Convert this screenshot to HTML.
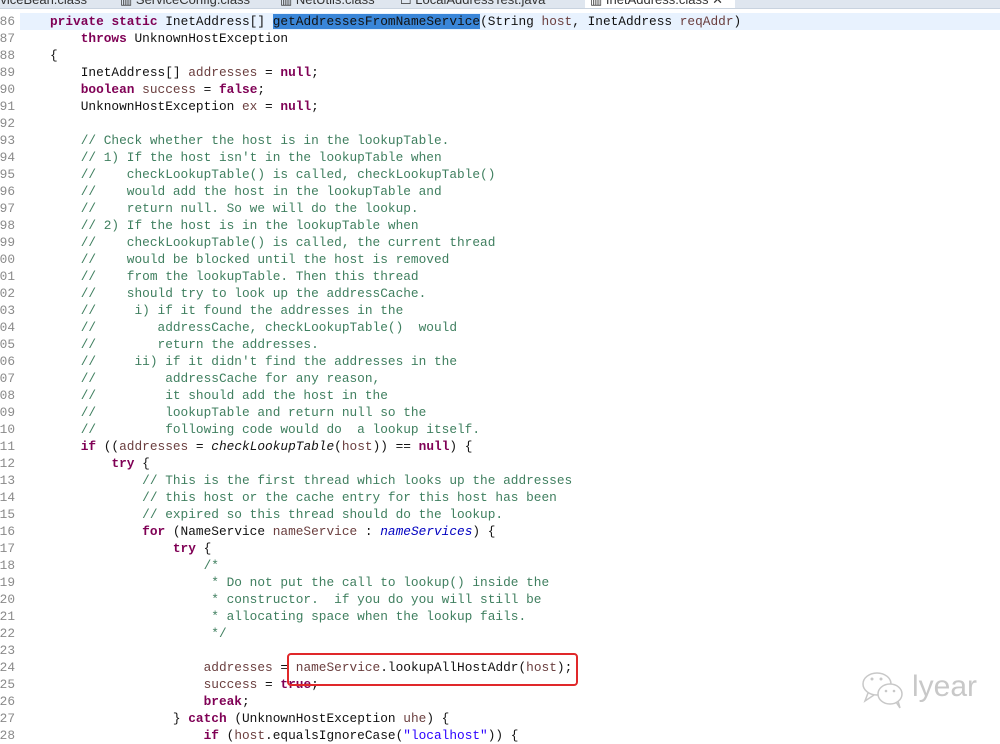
<!DOCTYPE html>
<html><head><meta charset="utf-8"><style>
html,body{margin:0;padding:0;width:1000px;height:736px;overflow:hidden;background:#fff;}
.tabs{position:absolute;left:0;top:0;width:1000px;height:8px;background:#dfe6ef;overflow:hidden;border-bottom:1px solid #c9d3df;}
.tabs span{position:absolute;top:-8px;font:13px "Liberation Sans",sans-serif;color:#333;}
.act{position:absolute;left:585px;top:0;width:150px;height:9px;background:#fff;}
.nums{position:absolute;left:-8px;top:13px;width:22px;text-align:right;font:12.8px/17px "Liberation Mono",monospace;color:#8a8a8a;white-space:pre;}
pre{position:absolute;left:50px;top:13px;margin:0;font:12.8px/17px "Liberation Mono",monospace;color:#111;}
.k{color:#7f0055;font-weight:bold}
.c{color:#3f7f5f}
.v{color:#6a3e3e}
.f{color:#0000c0;font-style:italic}
.m{font-style:italic}
.s{color:#2a00ff}
.sel{background:#3a86d8;}
.cur{position:absolute;left:20px;top:13px;width:980px;height:17px;background:#e8f2fe;}
.box{position:absolute;left:287px;top:653px;width:287px;height:29px;border:2px solid #e0282a;border-radius:4px;}
.wm{position:absolute;left:912px;top:670px;font:30px "Liberation Sans",sans-serif;color:#c8c8c8;}
</style></head><body>
<div class="tabs">
<span style="left:-4px">rviceBean.class</span>
<span style="left:120px">▥ ServiceConfig.class</span>
<span style="left:280px">▥ NetUtils.class</span>
<span style="left:400px">☐ LocalAddressTest.java</span>
<div class="act"></div>
<span style="left:590px">▥ InetAddress.class ✕</span>
</div>
<div class="cur"></div>
<div class="nums">386
387
388
389
390
391
392
393
394
395
396
397
398
399
400
401
402
403
404
405
406
407
408
409
410
411
412
413
414
415
416
417
418
419
420
421
422
423
424
425
426
427
428</div>
<pre><span class="k">private</span> <span class="k">static</span> InetAddress[] <span class="sel">getAddressesFromNameService</span>(String <span class="v">host</span>, InetAddress <span class="v">reqAddr</span>)
    <span class="k">throws</span> UnknownHostException
{
    InetAddress[] <span class="v">addresses</span> = <span class="k">null</span>;
    <span class="k">boolean</span> <span class="v">success</span> = <span class="k">false</span>;
    UnknownHostException <span class="v">ex</span> = <span class="k">null</span>;

<span class="c">    // Check whether the host is in the lookupTable.
    // 1) If the host isn't in the lookupTable when
    //    checkLookupTable() is called, checkLookupTable()
    //    would add the host in the lookupTable and
    //    return null. So we will do the lookup.
    // 2) If the host is in the lookupTable when
    //    checkLookupTable() is called, the current thread
    //    would be blocked until the host is removed
    //    from the lookupTable. Then this thread
    //    should try to look up the addressCache.
    //     i) if it found the addresses in the
    //        addressCache, checkLookupTable()  would
    //        return the addresses.
    //     ii) if it didn't find the addresses in the
    //         addressCache for any reason,
    //         it should add the host in the
    //         lookupTable and return null so the
    //         following code would do  a lookup itself.</span>
    <span class="k">if</span> ((<span class="v">addresses</span> = <span class="m">checkLookupTable</span>(<span class="v">host</span>)) == <span class="k">null</span>) {
        <span class="k">try</span> {
<span class="c">            // This is the first thread which looks up the addresses
            // this host or the cache entry for this host has been
            // expired so this thread should do the lookup.</span>
            <span class="k">for</span> (NameService <span class="v">nameService</span> : <span class="f">nameServices</span>) {
                <span class="k">try</span> {
<span class="c">                    /*
                     * Do not put the call to lookup() inside the
                     * constructor.  if you do you will still be
                     * allocating space when the lookup fails.
                     */</span>

                    <span class="v">addresses</span> = <span class="v">nameService</span>.lookupAllHostAddr(<span class="v">host</span>);
                    <span class="v">success</span> = <span class="k">true</span>;
                    <span class="k">break</span>;
                } <span class="k">catch</span> (UnknownHostException <span class="v">uhe</span>) {
                    <span class="k">if</span> (<span class="v">host</span>.equalsIgnoreCase(<span class="s">"localhost"</span>)) {</pre>
<div class="box"></div>
<svg style="position:absolute;left:860px;top:670px" width="50" height="40" viewBox="0 0 50 40">
<g fill="none" stroke="#c8c8c8" stroke-width="1.5">
<ellipse cx="17" cy="14" rx="14" ry="11"/>
<ellipse cx="30" cy="24" rx="12" ry="10" fill="#fff"/>
<path d="M8 23 L5 31 L14 25"/><path d="M36 32 L40 38 L38 31"/>
</g>
<g fill="#c8c8c8"><circle cx="12" cy="9" r="1.5"/><circle cx="21" cy="9" r="1.5"/><circle cx="26" cy="21" r="1.3"/><circle cx="34" cy="21" r="1.3"/></g>
</svg>
<div class="wm">lyear</div>
</body></html>
